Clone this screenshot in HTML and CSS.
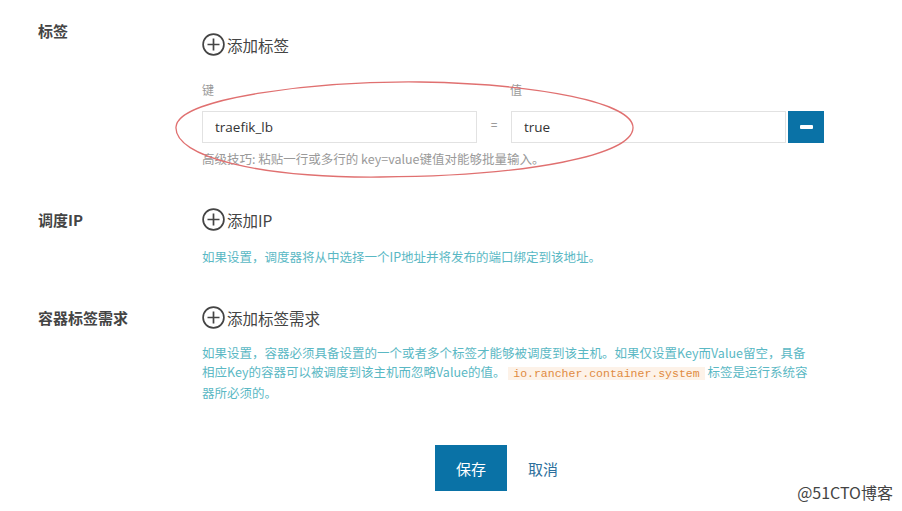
FILE: index.html
```html
<!DOCTYPE html>
<html lang="zh-CN">

<head>
    <meta charset="UTF-8">
    <meta name="viewport" content="width=device-width, initial-scale=1.0">
    <title>调度</title>
    <link rel="stylesheet" href="styles.css">
</head>

<body>
    <div class="form">

        <!-- labels -->
        <div class="row">
            <div class="row-label first">标签</div>
            <div class="row-body">
                <button class="add-btn first">
                    <svg class="plus" width="23" height="23" viewBox="0 0 23 23">
                        <circle cx="11.5" cy="11.5" r="10.4" fill="none" stroke="#444" stroke-width="1.7" />
                        <path d="M11.5 5.5v12M5.5 11.5h12" stroke="#444" stroke-width="1.7" />
                    </svg>
                    添加标签
                </button>
                <div class="kv">
                    <div class="kv-head">
                        <span class="kv-key">键</span>
                        <span class="kv-value">值</span>
                    </div>
                    <div class="kv-row">
                        <input class="text-input" type="text" value="traefik_lb">
                        <span class="eq">=</span>
                        <input class="text-input" type="text" value="true">
                        <button class="remove-btn"><span class="minus"></span></button>
                    </div>
                    <p class="hint gray">高级技巧: 粘贴一行或多行的 key=value键值对能够批量输入。</p>
                </div>
            </div>
        </div>

        <!-- scheduling ip -->
        <div class="row">
            <div class="row-label">调度IP</div>
            <div class="row-body">
                <button class="add-btn">
                    <svg class="plus" width="23" height="23" viewBox="0 0 23 23">
                        <circle cx="11.5" cy="11.5" r="10.4" fill="none" stroke="#444" stroke-width="1.7" />
                        <path d="M11.5 5.5v12M5.5 11.5h12" stroke="#444" stroke-width="1.7" />
                    </svg>
                    添加IP
                </button>
                <p class="hint teal">如果设置，调度器将从中选择一个IP地址并将发布的端口绑定到该地址。</p>
            </div>
        </div>

        <!-- container label requirements -->
        <div class="row">
            <div class="row-label">容器标签需求</div>
            <div class="row-body">
                <button class="add-btn">
                    <svg class="plus" width="23" height="23" viewBox="0 0 23 23">
                        <circle cx="11.5" cy="11.5" r="10.4" fill="none" stroke="#444" stroke-width="1.7" />
                        <path d="M11.5 5.5v12M5.5 11.5h12" stroke="#444" stroke-width="1.7" />
                    </svg>
                    添加标签需求
                </button>
                <p class="hint teal long">如果设置，容器必须具备设置的一个或者多个标签才能够被调度到该主机。如果仅设置Key而Value留空，具备相应Key的容器可以被调度到该主机而忽略Value的值。 <code>io.rancher.container.system</code> 标签是运行系统容器所必须的。</p>
            </div>
        </div>

        <div class="footer">
            <button class="btn-save">保存</button>
            <button class="btn-cancel">取消</button>
        </div>
    </div>

    <!-- hand drawn highlight over the key/value row -->
    <svg class="mark" width="480" height="110" viewBox="0 0 480 110">
        <path d="M6 52 C 8 22, 150 6, 250 7 C 370 9, 464 28, 463 53 C 462 80, 360 101, 210 102 C 90 103, 4 82, 6 52 Z"
            fill="none" stroke="#e07070" stroke-width="1.3" />
    </svg>

    <div class="watermark">@51CTO博客</div>
</body>

</html>
```

FILE: styles.css
```css
body {
    font-family: "Noto Sans CJK SC", "Open Sans", sans-serif;
    background-color: #ffffff;
    color: #333;
    margin: 0;
    padding: 0;
    position: relative;
    height: 511px;
    overflow: hidden;
}

.form {
    padding: 22px 0 0 38px;
}

.row {
    display: flex;
    margin-bottom: 40px;
}

.row-label {
    width: 164px;
    flex-shrink: 0;
    font-size: 15px;
    font-weight: bold;
    color: #444;
    line-height: 23px;
}

.row-label.first {
    line-height: 18px;
}

.row-body {
    width: 622px;
}

.add-btn {
    display: flex;
    align-items: center;
    gap: 2px;
    background: none;
    border: none;
    padding: 0;
    font-family: inherit;
    font-size: 15.5px;
    color: #444;
    height: 23px;
    cursor: pointer;
}

.add-btn.first {
    margin-top: 11px;
}

.kv {
    margin-top: 26px;
}

.kv-head {
    display: flex;
    font-size: 12px;
    color: #999;
    line-height: 16px;
    margin-bottom: 13px;
}

.kv-key {
    width: 308px;
}

.kv-row {
    display: flex;
    align-items: stretch;
    height: 32px;
}

.text-input {
    width: 275px;
    box-sizing: border-box;
    border: 1px solid #e2e2e2;
    padding: 0 12px;
    font-family: "Open Sans", sans-serif;
    font-size: 13.5px;
    color: #333;
    outline: none;
}

.eq {
    width: 34px;
    text-align: center;
    font-size: 12px;
    color: #888;
    line-height: 26px;
}

.remove-btn {
    width: 36px;
    margin-left: 2px;
    background-color: #0a72a6;
    border: none;
    display: flex;
    align-items: center;
    justify-content: center;
    cursor: pointer;
}

.minus {
    width: 13px;
    height: 4px;
    border-radius: 1px;
    background-color: white;
}

.hint {
    margin: 16px 0 0;
    font-size: 12.5px;
    line-height: 19px;
}

.kv .hint {
    margin-top: 6px;
}

.hint.gray {
    color: #9a9a9a;
}

.hint.teal {
    color: #5ab8c4;
}

.hint.long {
    margin-top: 14px;
    width: 611px;
}

code {
    font-family: "Liberation Mono", monospace;
    font-size: 11.5px;
    color: #e08a40;
    background-color: #fdf2e8;
    padding: 0 5px;
}

.footer {
    display: flex;
    justify-content: center;
    width: 622px;
    margin: 43px 0 0 158px;
}

.btn-save,
.btn-cancel {
    width: 72px;
    height: 46px;
    border: none;
    font-family: inherit;
    font-size: 15px;
    cursor: pointer;
}

.btn-save {
    background-color: #0a72a6;
    color: white;
}

.btn-cancel {
    background: none;
    color: #2d6f9c;
}

.mark {
    position: absolute;
    left: 170px;
    top: 75px;
}

.watermark {
    position: absolute;
    right: 9px;
    bottom: 7px;
    font-size: 16px;
    color: #444;
}
```
